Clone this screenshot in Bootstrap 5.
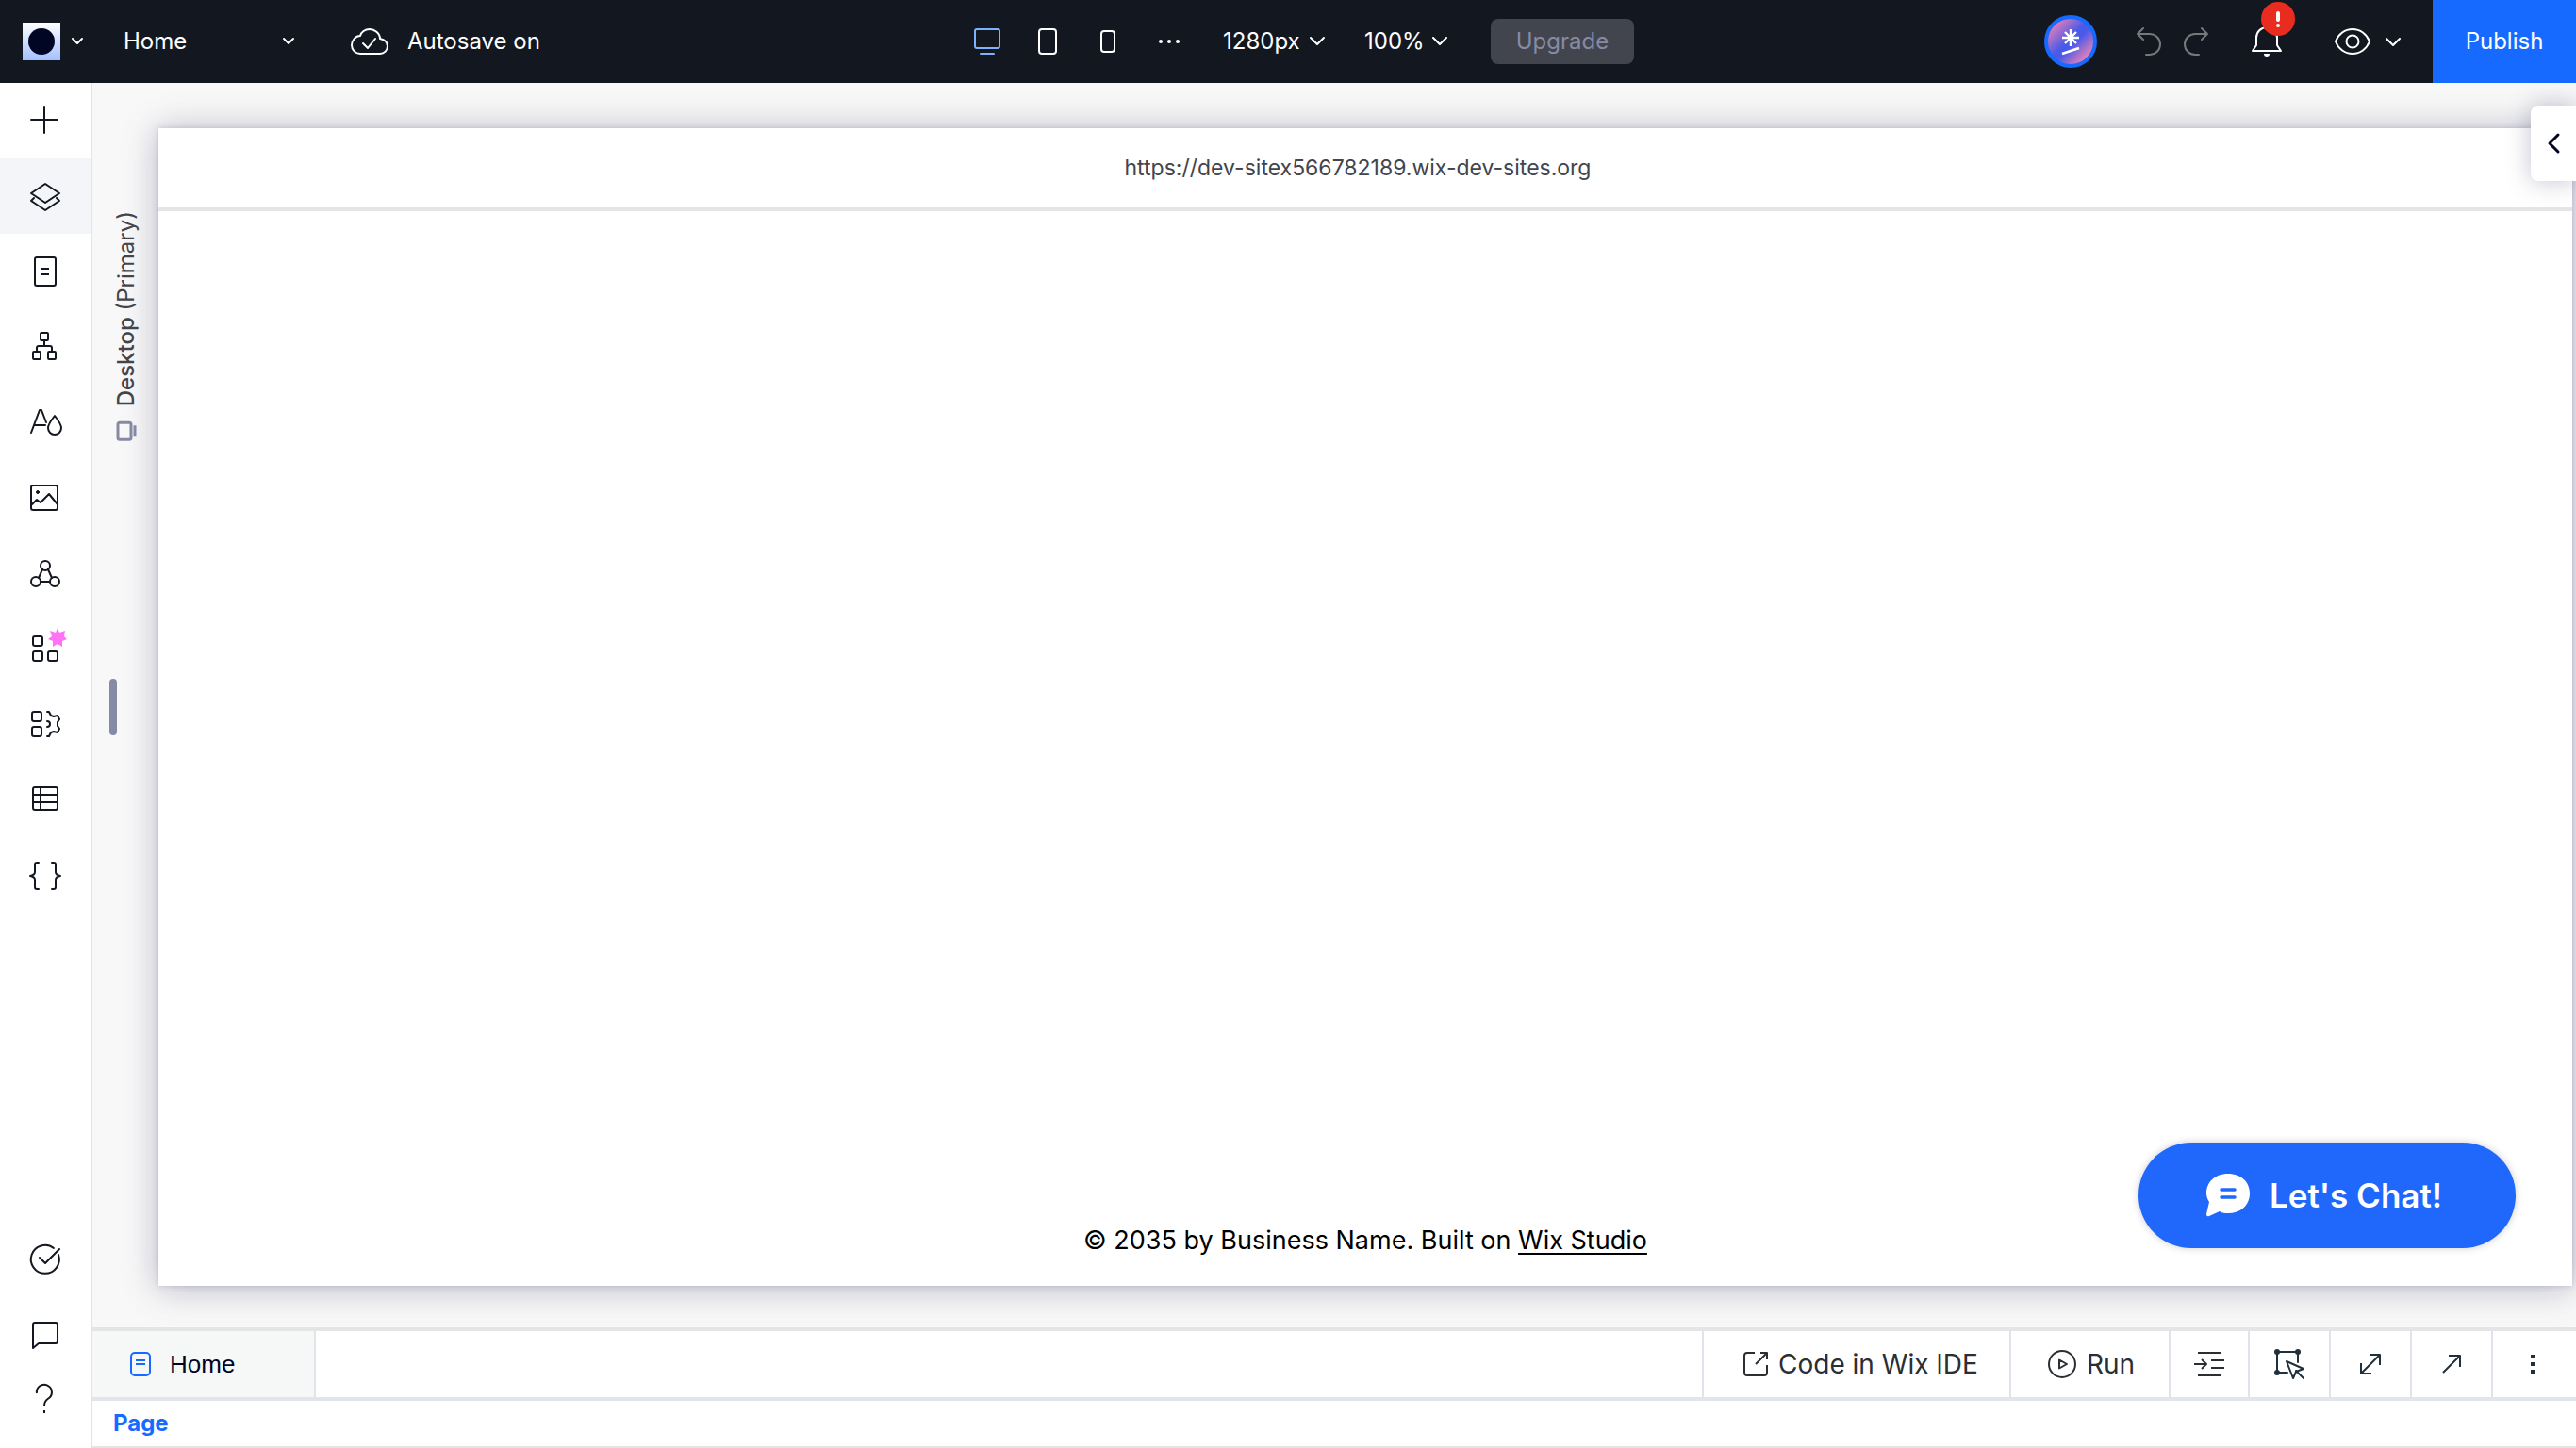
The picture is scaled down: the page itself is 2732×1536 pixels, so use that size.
<!DOCTYPE html>
<html lang="en">
<head>
<meta charset="utf-8">
<meta name="viewport" content="width=device-width, initial-scale=1">
<title>Wix Studio – Home</title>
<link href="https://cdn.jsdelivr.net/npm/bootstrap@5.3.0/dist/css/bootstrap.min.css" rel="stylesheet">
<style>
  body { font-family: Inter, "Open Sans", sans-serif; font-size: 24px; line-height: 32px; color: #131720; background: #f8f8f8; }
  button { color: inherit; background: none; border: 0; padding: 0; }
  svg { display: block; flex: none; overflow: visible; }
  .ico { fill: none; stroke: currentColor; stroke-width: 2; stroke-linecap: round; stroke-linejoin: round; }
  .topbar { height: 88px; background: #131720; color: #fff; }
  .side-group { flex: 1 1 0; }
  .site-menu { gap: 12px; }
  .site-logo { width: 40px; height: 40px; padding: 6px; background: linear-gradient(#fff, #a3bfff); }
  .site-logo i { display: block; width: 28px; height: 28px; border-radius: 50%; background: #000624; }
  .page-pick { width: 181px; margin-left: 43px; }
  .save-state { margin-left: 60px; gap: 20px; }
  .device-group { padding-left: 34px; gap: 46px; }
  .device-on { color: #7fb0ff; margin-right: -6px; }
  .width-pick { width: 108px; }
  .zoom-pick { width: 88px; margin-left: -4px; }
  .upgrade { width: 152px; height: 48px; border-radius: 8px; background: #42454d; color: #868aa5; }
  .publish { width: 152px; background: #166aff; }
  .member { width: 56px; height: 56px; border: 4px solid #166aff; border-radius: 50%; background: linear-gradient(135deg, #f283b4 8%, #4a5ae8 46%, #4a5ae8 56%, #f283b4 88%); }
  .history { margin: 0 46px 0 42px; gap: 24px; color: #77787c; }
  .preview { margin: 0 34px 0 56px; gap: 16px; }
  .bell-badge { position: absolute; left: 10px; top: -26px; width: 36px; height: 36px; border-radius: 50%; background: #e92c20; }
  .rail { width: 98px; padding-bottom: 24px; border-right: 2px solid #e4e4e4; background: #fff; }
  .rail button { width: 96px; height: 80px; }
  .rail .is-on { background: #f3f5f9; }
  .rail .short-btn { height: 56px; }
  .stage { padding: 48px 4px 44px 0; }
  .gutter { width: 70px; }
  .bp-label { position: absolute; left: 20px; top: 0; writing-mode: vertical-rl; transform: rotate(180deg); padding-bottom: 88px; gap: 16px; color: #42454d; }
  .bp-label svg { color: #868aa5; stroke-width: 3; }
  .drag-grip { position: absolute; left: 18px; top: 584px; width: 8px; height: 60px; border-radius: 4px; background: #868aa5; }
  .site-frame { background: #fff; box-shadow: 0 0 6px rgba(90,90,130,.25), 0 2px 34px rgba(90,90,130,.42); }
  .url-bar { height: 88px; padding-right: 16px; border-bottom: 4px solid #e4e4e4; color: #42454d; font-size: 23px; }
  .site-foot { font-size: 27px; line-height: 36px; color: #000; padding-bottom: 30px; }
  .site-foot a { color: #000; text-decoration-thickness: 2px; text-underline-offset: 4px; }
  .chat-btn { position: absolute; right: 60px; bottom: 40px; width: 400px; height: 112px; padding-left: 72px; border-radius: 56px; background: #2067fb; color: #fff; font-size: 35px; font-weight: 600; box-shadow: 0 0 8px rgba(0,0,0,.2); gap: 21px; }
  .panel-toggle { position: absolute; right: 0; top: 24px; width: 48px; height: 80px; border-radius: 8px 0 0 8px; background: #fff; color: #000624; box-shadow: 0 0 26px rgba(80,80,120,.35); }
  .panel-toggle svg { stroke-width: 3; }
  .code-panel { border-top: 4px solid #e4e4e4; background: #fff; }
  .tab-row { height: 74px; border-bottom: 4px solid #e1e4ea; padding-right: 4px; }
  .file-tab { width: 237px; padding-left: 40px; gap: 20px; border-right: 2px solid #e1e4ea; background: #f6f8f8; color: #000624; font: 26px/32px "Liberation Sans", sans-serif; }
  .file-tab svg { color: #166aff; }
  .tool { border-left: 2px solid #dfe3eb; width: 86px; color: #20303c; }
  .tool-code, .tool-run { gap: 11px; color: #2b2e33; font-size: 28px; }
  .tool-code { width: 326px; padding-left: 42px; }
  .tool-run { width: 169px; padding-left: 39px; }
  .tool-in { width: 84px; color: #2b2e33; }
  .crumb-row { height: 50px; padding-left: 22px; border-bottom: 2px solid #e4e4e4; }
  .crumb-row a { color: #166aff; font-weight: 700; text-decoration: none; }
</style>
<script src="https://cdn.jsdelivr.net/npm/bootstrap@5.3.0/dist/js/bootstrap.bundle.min.js"></script>
</head>
<body class="d-flex flex-column min-vh-100">
<header class="topbar d-flex">
  <div class="side-group d-flex align-items-center">
    <button class="site-menu d-flex align-items-center ms-4" aria-label="Site menu">
      <span class="site-logo"><i></i></span>
      <svg class="ico" width="12" height="8" viewBox="0 0 12 8"><path d="M1 1l5 5 5-5"/></svg>
    </button>
    <button class="page-pick d-flex align-items-center justify-content-between">Home
      <svg class="ico" width="12" height="8" viewBox="0 0 12 8"><path d="M1 1l5 5 5-5"/></svg>
    </button>
    <span class="save-state d-flex align-items-center">
      <svg class="ico" width="40" height="28" viewBox="0 0 40 28"><path d="M10 27a9 9 0 0 1-9-9c0-5 4-10 9-10 1-4 5-7 10-7s11 4 11 10c5 1 8 4 8 8a8 8 0 0 1-8 8z"/><path d="M13 16l5 5 8-10"/></svg>
      <span>Autosave on</span>
    </span>
  </div>
  <div class="device-group d-flex align-items-center">
    <button class="device-on" aria-label="Desktop"><svg class="ico" width="28" height="28" viewBox="0 0 28 28"><rect x="1" y="1" width="26" height="20" rx="2"/><path d="M7 27h14"/></svg></button>
    <button aria-label="Tablet"><svg class="ico" width="20" height="28" viewBox="0 0 20 28"><rect x="1" y="1" width="18" height="26" rx="3"/></svg></button>
    <button aria-label="Mobile"><svg class="ico" width="16" height="24" viewBox="0 0 16 24"><rect x="1" y="1" width="14" height="22" rx="3"/></svg></button>
    <button aria-label="More breakpoints"><svg width="22" height="6" viewBox="0 0 22 6" fill="#fff"><circle cx="2" cy="3" r="2"/><circle cx="11" cy="3" r="2"/><circle cx="20" cy="3" r="2"/></svg></button>
    <button class="width-pick d-flex align-items-center justify-content-between">1280px<svg class="ico" width="16" height="10" viewBox="0 0 16 10"><path d="M1 1l7 7 7-7"/></svg></button>
    <button class="zoom-pick d-flex align-items-center justify-content-between">100%<svg class="ico" width="16" height="10" viewBox="0 0 16 10"><path d="M1 1l7 7 7-7"/></svg></button>
    <button class="upgrade">Upgrade</button>
  </div>
  <div class="side-group d-flex align-items-center justify-content-end">
    <button class="member" aria-label="AI assistant"><svg width="48" height="48" viewBox="0 0 48 48" stroke="#fff" stroke-width="2.4"><path d="M24 11v18M15 20h18M18 14l12 12M30 14L18 26M15 37l18-6"/></svg></button>
    <div class="history d-flex">
      <button aria-label="Undo"><svg class="ico" width="26" height="30" viewBox="0 0 26 30"><path d="M7 1L1 7l6 6M1 7h13a11 11 0 0 1 0 22h-4"/></svg></button>
      <button aria-label="Redo"><svg class="ico" width="26" height="30" viewBox="0 0 26 30"><path d="M19 1l6 6-6 6M25 7H12a11 11 0 0 0 0 22h4"/></svg></button>
    </div>
    <button class="position-relative" aria-label="Notifications"><svg class="ico" width="32" height="32" viewBox="0 0 32 32"><path d="M5 20V12a11 11 0 0 1 22 0v8l4 6H1zM5 20l-4 6"/><path d="M13 29h6a3 3 0 0 1-6 0z" fill="#fff" stroke="none"/></svg>
      <span class="bell-badge"><svg width="36" height="36" viewBox="0 0 36 36" fill="#fff"><rect x="16" y="10" width="4" height="11" rx="2"/><circle cx="18" cy="25" r="2"/></svg></span></button>
    <button class="preview d-flex align-items-center" aria-label="Preview"><svg class="ico" width="38" height="28" viewBox="0 0 38 28"><path d="M1 14C4 6 11 1 19 1s15 5 18 13c-3 8-10 13-18 13S4 22 1 14z"/><circle cx="19" cy="14" r="6.500"/></svg><svg class="ico" width="16" height="9" viewBox="0 0 16 9"><path d="M1 1l7 7 7-7"/></svg></button>
    <button class="publish h-100">Publish</button>
  </div>
</header>

<div class="d-flex flex-grow-1">
  <nav class="rail d-flex flex-column flex-shrink-0" aria-label="Editor tools">
    <button class="d-flex align-items-center justify-content-center" aria-label="Add"><svg class="ico" width="32" height="32" viewBox="0 0 32 32"><path d="M15 1v28M1 15h28"/></svg></button>
    <button class="is-on d-flex align-items-center justify-content-center" aria-label="Layers"><svg class="ico" width="32" height="32" viewBox="0 0 32 32"><path d="M16 3l15 10-15 10L1 13zM4 18l-3 3 15 10 15-10-3-3"/></svg></button>
    <button class="d-flex align-items-center justify-content-center" aria-label="Pages"><svg class="ico" width="32" height="32" viewBox="0 0 32 32"><rect x="5" y="1" width="22" height="30" rx="2"/><path d="M12 13h8M12 19h8" stroke-linecap="butt"/></svg></button>
    <button class="d-flex align-items-center justify-content-center" aria-label="Masters"><svg class="ico" width="32" height="32" viewBox="0 0 32 32"><rect x="11" y="1" width="8" height="8" rx="1"/><rect x="3" y="21" width="8" height="8" rx="1"/><rect x="19" y="21" width="8" height="8" rx="1"/><path d="M15 9v6M7 21v-4q0-2 2-2h12q2 0 2 2v4"/></svg></button>
    <button class="d-flex align-items-center justify-content-center" aria-label="Site styles"><svg class="ico" width="32" height="32" viewBox="0 0 32 32"><path d="M1 27L10 3h2l5 13M5 19h11M26 9c-4 5-7 9-7 13a7 7 0 0 0 14 0c0-4-3-8-7-13z"/></svg></button>
    <button class="d-flex align-items-center justify-content-center" aria-label="Media"><svg class="ico" width="32" height="32" viewBox="0 0 32 32"><rect x="1" y="3" width="28" height="26" rx="2"/><path d="M2 23l5-5 4 3 9-9 9 11"/><circle cx="8" cy="10" r="1.500" fill="currentColor" stroke-width="1"/></svg></button>
    <button class="d-flex align-items-center justify-content-center" aria-label="Social"><svg class="ico" width="32" height="32" viewBox="0 0 32 32"><circle cx="16" cy="8" r="5"/><circle cx="6" cy="25" r="5"/><circle cx="26" cy="25" r="5"/><path d="M13 12L9 21M19 12l4 9M11 25h10"/></svg></button>
    <button class="d-flex align-items-center justify-content-center" aria-label="App market"><svg class="ico" width="32" height="32" viewBox="0 0 32 32"><rect x="3" y="3" width="10" height="10" rx="2"/><rect x="3" y="19" width="10" height="10" rx="2"/><rect x="19" y="19" width="10" height="10" rx="2"/><path d="M29-6l2 5 6-2-1 6 3 3-5 2 0 6-5-3-5 3 0-6-5-2 4-3-2-6 6 2z" fill="#ff73f6" stroke="none"/></svg></button>
    <button class="d-flex align-items-center justify-content-center" aria-label="Custom elements"><svg class="ico" width="32" height="32" viewBox="0 0 32 32"><rect x="2" y="3" width="10" height="10" rx="2"/><rect x="2" y="19" width="10" height="10" rx="2"/><path d="M18 3h2l2 4 3 1 4-1 2 4-2 3v4l2 3-2 4-4-1-3 1-2 4h-2M18 13a3 3 0 0 1 0 6"/></svg></button>
    <button class="d-flex align-items-center justify-content-center" aria-label="CMS"><svg class="ico" width="32" height="32" viewBox="0 0 32 32"><rect x="3" y="3" width="26" height="24" rx="2"/><path d="M3 11h26M3 19h26M11 3v24"/></svg></button>
    <button class="d-flex align-items-center justify-content-center" aria-label="Code"><svg class="ico" width="34" height="32" viewBox="0 0 34 32"><path d="M10 3H8q-2 0-2 2v8q0 3-5 4 5 1 5 4v8q0 2 2 2h2M24 3h2q2 0 2 2v8q0 3 5 4-5 1-5 4v8q0 2-2 2h-2"/></svg></button>
    <button class="mt-auto d-flex align-items-center justify-content-center" aria-label="Site checker"><svg class="ico" width="32" height="32" viewBox="0 0 32 32"><path d="M25 4a15 15 0 1 0 5 7M10 14l6 6L31 5"/></svg></button>
    <button class="d-flex align-items-center justify-content-center" aria-label="Comments"><svg class="ico" width="32" height="32" viewBox="0 0 32 32"><path d="M5 3h22q2 0 2 2v18q0 2-2 2H9l-6 5V5q0-2 2-2z"/></svg></button>
    <button class="short-btn d-flex align-items-center justify-content-center" aria-label="Help"><svg class="ico" width="20" height="32" viewBox="0 0 20 32"><path d="M1 10a8 8 0 1 1 13 5q-5 3-5 8M9 28v3" stroke-linecap="butt"/></svg></button>
  </nav>

  <div class="d-flex flex-column flex-grow-1">
    <main class="stage position-relative d-flex flex-grow-1">
      <aside class="gutter position-relative flex-shrink-0">
        <div class="bp-label d-flex align-items-center justify-content-end">
          <svg class="ico" width="20" height="20" viewBox="0 0 20 20"><rect x="5" y="1" width="14" height="18" rx="2"/><path d="M1 4v12" stroke-linecap="butt"/></svg>
          <span><span class="fw-medium">Desktop</span> (Primary)</span>
        </div>
        <div class="drag-grip"></div>
      </aside>
      <section class="site-frame position-relative flex-grow-1 d-flex flex-column">
        <div class="url-bar d-flex align-items-center justify-content-center">https://dev-sitex566782189.wix-dev-sites.org</div>
        <footer class="site-foot mt-auto text-center">© 2035 by Business Name. Built on <a href="#">Wix Studio</a></footer>
        <button class="chat-btn d-flex align-items-center"><svg width="46" height="46" viewBox="0 0 46 46"><path d="M23 0c14 0 23 9 23 21S37 42 23 42c-3 0-6 0-9-2L3 45q-3 1-3-2l3-13C1 27 0 24 0 21 0 9 9 0 23 0z" fill="#fff"/><path d="M16 17h14M16 25h14" stroke="#2067fb" stroke-width="3.500" stroke-linecap="round"/></svg>Let's Chat!</button>
      </section>
      <button class="panel-toggle d-flex align-items-center justify-content-center" aria-label="Open inspector"><svg class="ico" width="12" height="20" viewBox="0 0 12 20"><path d="M11 1l-9 9 9 9"/></svg></button>
    </main>

    <section class="code-panel">
      <div class="tab-row d-flex">
        <button class="file-tab d-flex align-items-center me-auto"><svg class="ico" width="22" height="26" viewBox="0 0 22 26"><rect x="1" y="1" width="20" height="24" rx="4"/><path d="M6 9h10M6 13h10" stroke-linecap="butt"/></svg>Home</button>
        <button class="tool tool-code d-flex align-items-center"><svg class="ico" width="26" height="26" viewBox="0 0 26 26"><path d="M12 1H4Q1 1 1 4v18q0 3 3 3h18q3 0 3-3v-8M13 13L25 1M18 1h7v7" stroke-linecap="butt"/></svg>Code in Wix IDE</button>
        <button class="tool tool-run d-flex align-items-center"><svg class="ico" width="30" height="30" viewBox="0 0 30 30"><circle cx="15" cy="15" r="14"/><path d="M12 10.500v9l8-4.500z"/></svg>Run</button>
        <button class="tool tool-in d-flex align-items-center justify-content-center" aria-label="Format code"><svg class="ico" width="32" height="26" viewBox="0 0 32 26"><path d="M4 1h24M18 9h14M18 17h14M4 25h24M0 13h13M8 8l5 5-5 5" stroke-linecap="butt"/></svg></button>
        <button class="tool d-flex align-items-center justify-content-center" aria-label="Select element"><svg class="ico" width="32" height="32" viewBox="0 0 32 32"><path d="M3 3h22v11M3 3v22h11M13 13l18 8-8 3-3 7zM23 23l8 8"/><g fill="currentColor" stroke="none"><circle cx="3" cy="3" r="3"/><circle cx="25" cy="3" r="3"/><circle cx="3" cy="25" r="3"/></g></svg></button>
        <button class="tool d-flex align-items-center justify-content-center" aria-label="Expand"><svg class="ico" width="22" height="22" viewBox="0 0 22 22"><path d="M1 21L21 1M10 1h11v11M1 10v11h11" stroke-linecap="butt"/></svg></button>
        <button class="tool d-flex align-items-center justify-content-center" aria-label="Open in window"><svg class="ico" width="20" height="20" viewBox="0 0 20 20"><path d="M1 19L19 1M7 1h12v12" stroke-linecap="butt"/></svg></button>
        <button class="tool d-flex align-items-center justify-content-center" aria-label="More"><svg width="4" height="20" viewBox="0 0 4 20" fill="currentColor"><path d="M0 0h4v4H0zM0 8h4v4H0zM0 16h4v4H0z"/></svg></button>
      </div>
      <div class="crumb-row d-flex align-items-center"><a href="#">Page</a></div>
    </section>
  </div>
</div>
</body>
</html>
